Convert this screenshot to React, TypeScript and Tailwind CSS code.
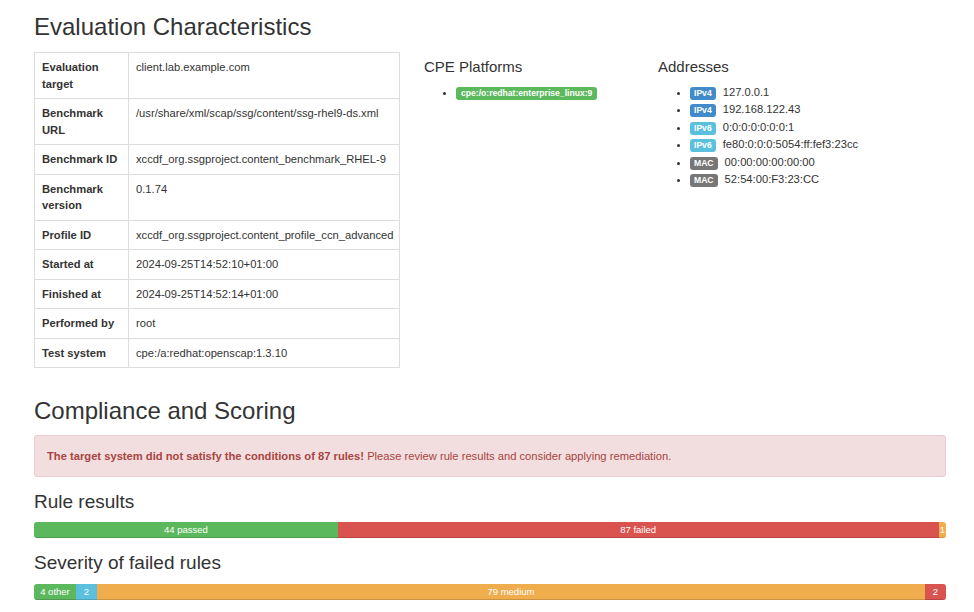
import React from "react";

const rows: [string, string][] = [
  ["Evaluation target", "client.lab.example.com"],
  ["Benchmark URL", "/usr/share/xml/scap/ssg/content/ssg-rhel9-ds.xml"],
  ["Benchmark ID", "xccdf_org.ssgproject.content_benchmark_RHEL-9"],
  ["Benchmark version", "0.1.74"],
  ["Profile ID", "xccdf_org.ssgproject.content_profile_ccn_advanced"],
  ["Started at", "2024-09-25T14:52:10+01:00"],
  ["Finished at", "2024-09-25T14:52:14+01:00"],
  ["Performed by", "root"],
  ["Test system", "cpe:/a:redhat:openscap:1.3.10"],
];

const addresses: { kind: string; value: string; cls: string }[] = [
  { kind: "IPv4", value: "127.0.0.1", cls: "bg-[#428bca]" },
  { kind: "IPv4", value: "192.168.122.43", cls: "bg-[#428bca]" },
  { kind: "IPv6", value: "0:0:0:0:0:0:0:1", cls: "bg-[#5bc0de]" },
  { kind: "IPv6", value: "fe80:0:0:0:5054:ff:fef3:23cc", cls: "bg-[#5bc0de]" },
  { kind: "MAC", value: "00:00:00:00:00:00", cls: "bg-[#777777]" },
  { kind: "MAC", value: "52:54:00:F3:23:CC", cls: "bg-[#777777]" },
];

type Seg = { label: string; pct: number; cls: string };

function Bar({ segs }: { segs: Seg[] }) {
  return (
    <div className="flex h-4 w-full overflow-hidden rounded-[3px] bg-[#f5f5f5]">
      {segs.map((s, i) => (
        <div
          key={i}
          className={`flex items-center justify-center text-[9.5px] leading-4 text-white shadow-[inset_0_-1px_0_rgba(0,0,0,0.15)] ${s.cls}`}
          style={{ width: `${s.pct}%` }}
        >
          {s.label}
        </div>
      ))}
    </div>
  );
}

export default function App() {
  return (
    <div className="min-h-[612px] bg-white pl-[34px] pr-[28px] text-[#333] [font-family:'Liberation_Sans',Arial,sans-serif]">
      <h2 className="pt-[10px] text-[24px] leading-[34px] text-[#333]">Evaluation Characteristics</h2>

      <div className="mt-[8px] flex">
        <table className="w-[366px] table-fixed border-collapse text-[11.2px] leading-[16.5px]">
          <colgroup>
            <col className="w-[94px]" />
            <col />
          </colgroup>
          <tbody>
            {rows.map(([k, v]) => (
              <tr key={k}>
                <th className="border border-[#ddd] px-[7px] py-[6px] text-left align-top font-bold">{k}</th>
                <td className="border border-[#ddd] px-[7px] py-[6px] align-top">{v}</td>
              </tr>
            ))}
          </tbody>
        </table>

        <div className="ml-[24px] w-[234px]">
          <h4 className="mt-[5px] text-[15px] leading-[20px]">CPE Platforms</h4>
          <ul className="mt-[7px] list-disc pl-[32px] text-[11.2px] leading-[17.6px]">
            <li>
              <span className="inline-block rounded-[3px] bg-[#5cb85c] px-[5px] text-[8.6px] leading-[13px] font-bold text-white">
                cpe:/o:redhat:enterprise_linux:9
              </span>
            </li>
          </ul>
        </div>

        <div>
          <h4 className="mt-[5px] text-[15px] leading-[20px]">Addresses</h4>
          <ul className="mt-[7px] list-disc pl-[32px] text-[11.2px] leading-[17.4px]">
            {addresses.map((a, i) => (
              <li key={i}>
                <span className={`mr-[7px] inline-block rounded-[3px] px-[4px] text-[8.6px] leading-[13px] font-bold text-white ${a.cls}`}>
                  {a.kind}
                </span>
                {a.value}
              </li>
            ))}
          </ul>
        </div>
      </div>

      <h2 className="mt-[26px] text-[24px] leading-[34px]">Compliance and Scoring</h2>
      <div className="mt-[7px] rounded-[3px] border border-[#ebccd1] bg-[#f2dede] px-[12px] py-[12px] text-[11.2px] leading-[16px] text-[#a94442]">
        <strong>The target system did not satisfy the conditions of 87 rules!</strong> Please review rule results and consider applying remediation.
      </div>

      <h3 className="mt-[12px] text-[19px] leading-[26px]">Rule results</h3>
      <div className="mt-[7px]">
        <Bar
          segs={[
            { label: "44 passed", pct: 33.3, cls: "bg-[#5cb85c]" },
            { label: "87 failed", pct: 65.9, cls: "bg-[#d9534f]" },
            { label: "1", pct: 0.8, cls: "bg-[#f0ad4e]" },
          ]}
        />
      </div>

      <h3 className="mt-[12px] text-[19px] leading-[26px]">Severity of failed rules</h3>
      <div className="mt-[8px]">
        <Bar
          segs={[
            { label: "4 other", pct: 4.6, cls: "bg-[#5cb85c]" },
            { label: "2", pct: 2.3, cls: "bg-[#5bc0de]" },
            { label: "79 medium", pct: 90.8, cls: "bg-[#f0ad4e]" },
            { label: "2", pct: 2.3, cls: "bg-[#d9534f]" },
          ]}
        />
      </div>
    </div>
  );
}
